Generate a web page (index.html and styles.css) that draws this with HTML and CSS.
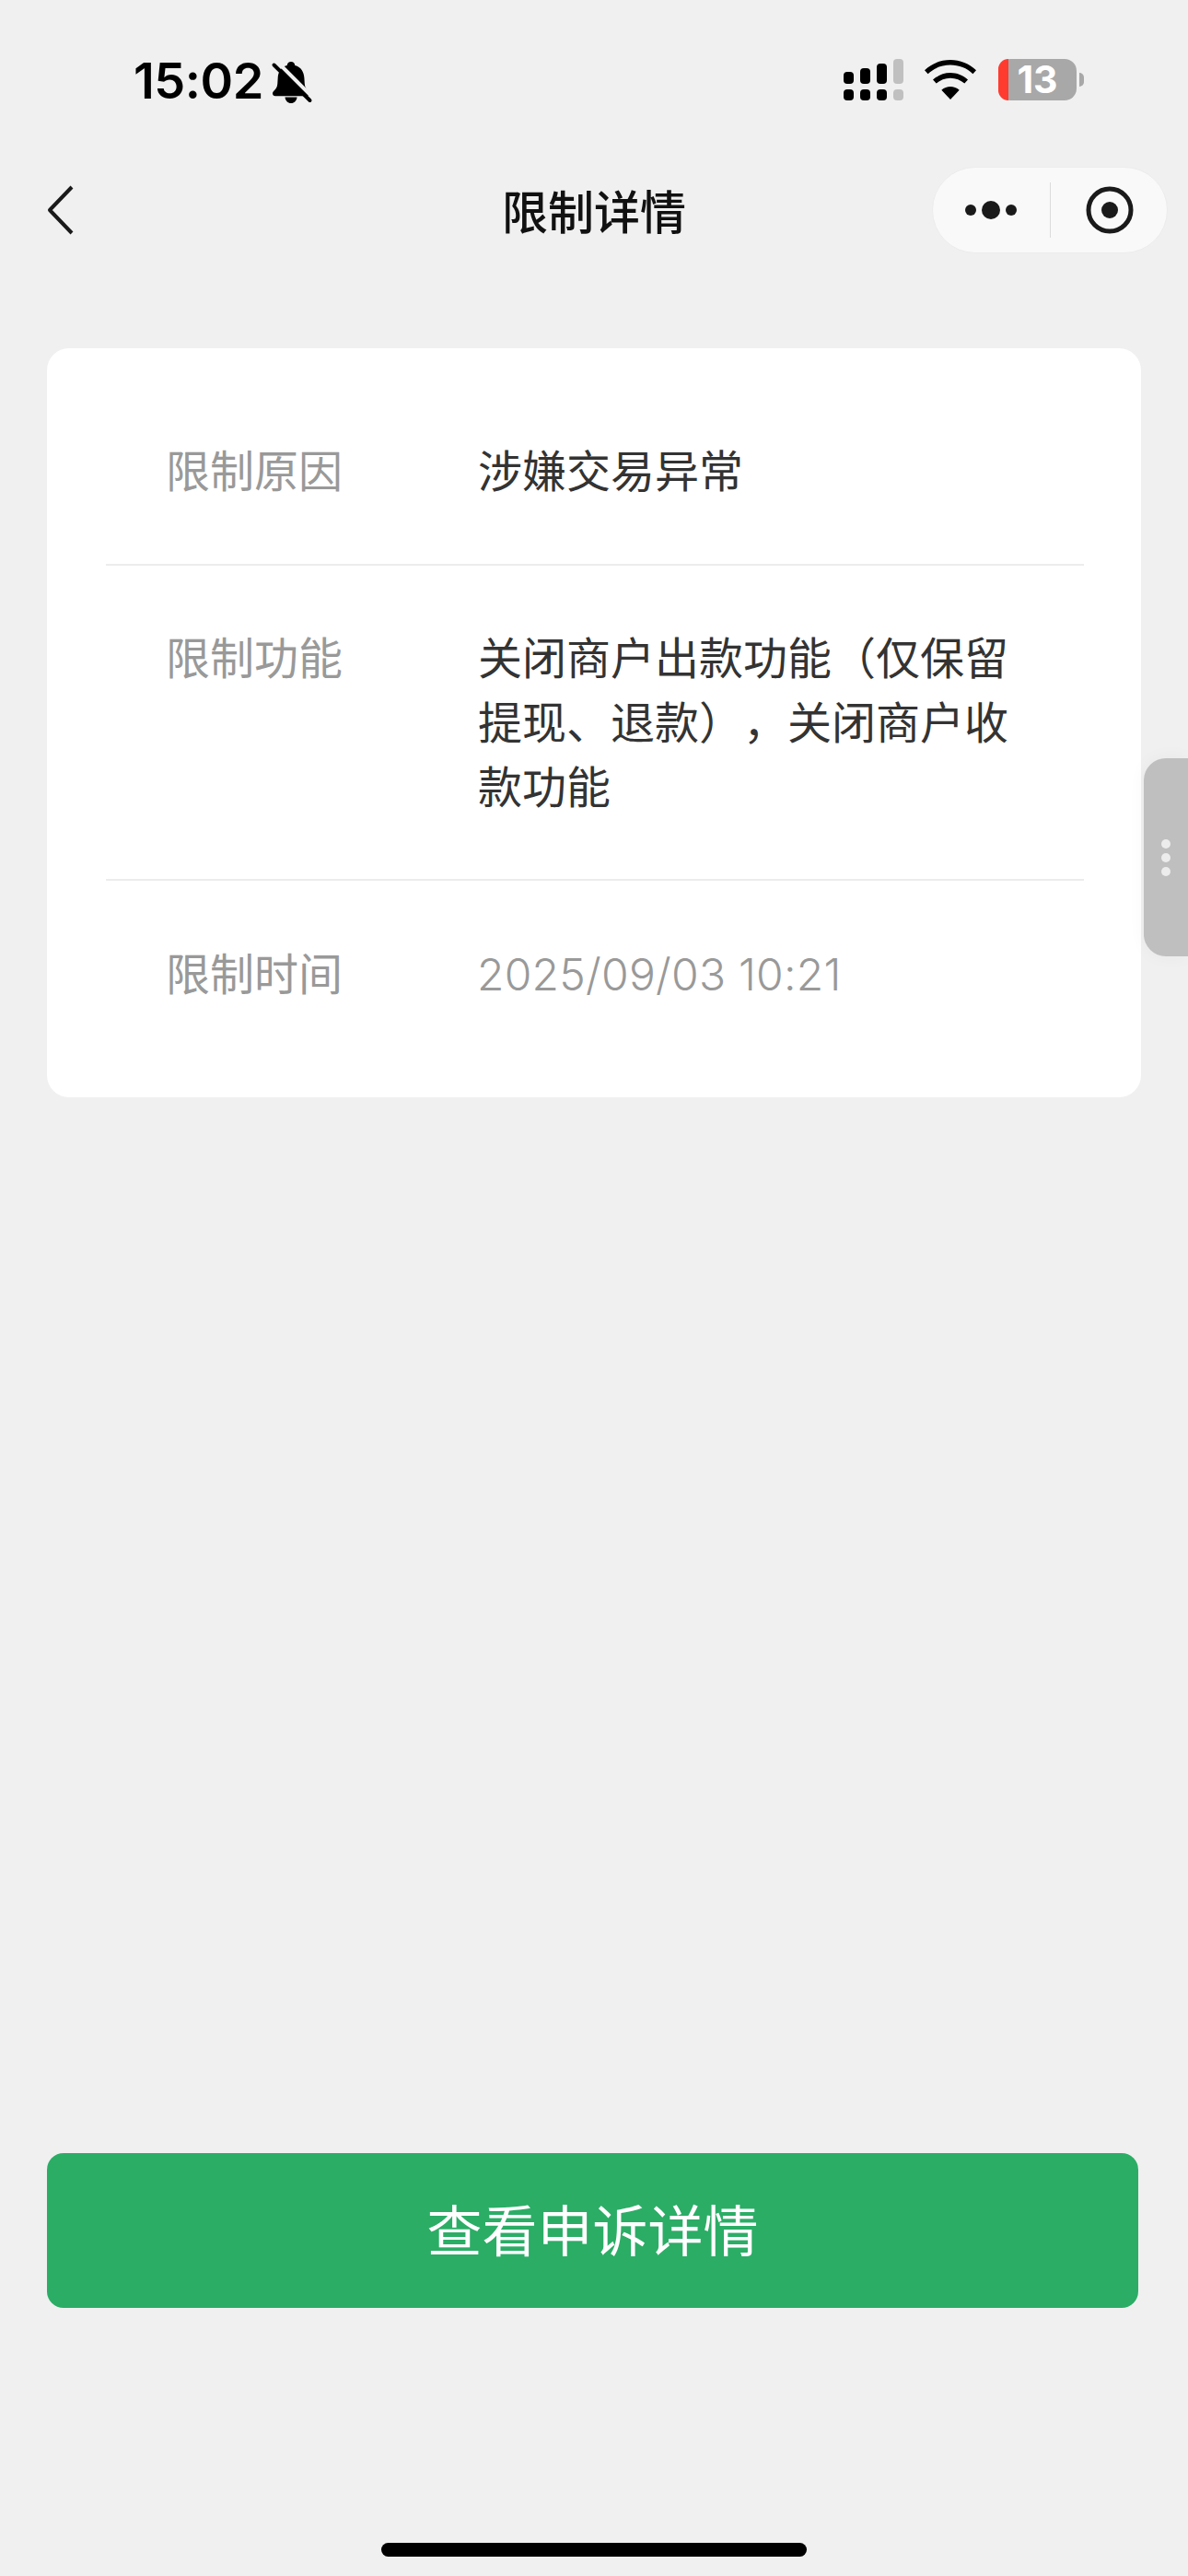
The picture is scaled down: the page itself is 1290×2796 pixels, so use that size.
FILE: index.html
```html
<!DOCTYPE html>
<html lang="zh-CN">
<head>
<meta charset="utf-8">
<title>限制详情</title>
<link rel="stylesheet" href="styles.css">
</head>
<body>
<div class="page">
  <header class="status">
    <div class="status-left">
      <span class="time">15:02</span>
      <svg class="bell" width="46" height="46" viewBox="0 0 46 46">
        <path d="M22 0c2.400 0 4 1.700 4.300 3.900C33 5.600 36 11 36.400 17.500l.4 6.500c.2 3.300 1.500 5.400 4 7.800 1 1 1.300 1.900 1.300 2.800 0 1.600-1.200 2.700-3 2.700H5c-1.800 0-3-1.100-3-2.700 0-.9.300-1.800 1.300-2.800 2.500-2.400 3.800-4.500 4-7.800l.4-6.500C8 11 11 5.600 17.700 3.900 18 1.700 19.600 0 22 0z" fill="#000"/>
        <path d="M15.500 38.500h13C28 42.500 25.500 45 22 45s-6-2.500-6.500-6.500z" fill="#000"/>
        <path d="M7 0l39 39" stroke="#f0f0f0" stroke-width="4"/>
        <path d="M3.500 3.500l39 38.500" stroke="#000" stroke-width="4" stroke-linecap="round"/>
      </svg>
    </div>
    <div class="status-right">
      <svg class="signal" width="66" height="46" viewBox="0 0 66 46">
        <rect x="0" y="14" width="11" height="13" rx="4" fill="#000"/>
        <rect x="18" y="10" width="11" height="17" rx="4" fill="#000"/>
        <rect x="36" y="5" width="11" height="22" rx="4" fill="#000"/>
        <rect x="54" y="0" width="11" height="27" rx="4" fill="#c0c0c0"/>
        <rect x="0" y="33" width="11" height="12" rx="4" fill="#000"/>
        <rect x="18" y="33" width="11" height="12" rx="4" fill="#000"/>
        <rect x="36" y="33" width="11" height="12" rx="4" fill="#000"/>
        <rect x="54" y="33" width="11" height="12" rx="4" fill="#c0c0c0"/>
      </svg>
      <svg class="wifi" width="58" height="44" viewBox="0 0 58 44">
        <path d="M29 0c10.500 0 20.500 4 28 11.300l-3.600 4C47 9 38.300 5.600 29 5.600S11 9 4.600 15.300L1 11.300C8.500 4 18.500 0 29 0z" fill="#000"/>
        <path d="M29 14c7 0 13.700 2.700 19 7.600l-3.700 4C40.200 22 34.800 19.800 29 19.800S17.800 22 13.700 25.600l-3.700-4C15.300 16.700 22 14 29 14z" fill="#000"/>
        <path d="M29 29c3.500 0 6.800 1.300 9.700 3.700L29 43 19.300 32.700C22.200 30.300 25.500 29 29 29z" fill="#000"/>
      </svg>
      <div class="battery">
        <div class="battery-body">
          <span class="battery-low"></span>
          <span class="battery-num">13</span>
        </div>
        <span class="battery-cap"></span>
      </div>
    </div>
  </header>

  <nav class="nav">
    <svg class="back" width="30" height="54" viewBox="0 0 30 54">
      <path d="M27 2 L3 27 L27 52" fill="none" stroke="#1a1a1a" stroke-width="4" stroke-linejoin="round"/>
    </svg>
    <h1 class="title">限制详情</h1>
    <div class="capsule">
      <svg class="capsule-more" width="58" height="22" viewBox="0 0 58 22">
        <circle cx="6" cy="11" r="6" fill="#1a1a1a"/>
        <circle cx="28" cy="11" r="10" fill="#1a1a1a"/>
        <circle cx="50" cy="11" r="6" fill="#1a1a1a"/>
      </svg>
      <span class="capsule-sep"></span>
      <svg class="capsule-record" width="52" height="52" viewBox="0 0 52 52">
        <circle cx="26" cy="26" r="23" fill="none" stroke="#1a1a1a" stroke-width="5"/>
        <circle cx="26" cy="26" r="9" fill="#1a1a1a"/>
      </svg>
    </div>
  </nav>

  <main class="card">
    <div class="row">
      <div class="label">限制原因</div>
      <div class="value">涉嫌交易异常</div>
    </div>
    <div class="row">
      <div class="label">限制功能</div>
      <div class="value">关闭商户出款功能（仅保留提现、退款），关闭商户收款功能</div>
    </div>
    <div class="row">
      <div class="label">限制时间</div>
      <div class="value value-muted">2025/09/03 10:21</div>
    </div>
  </main>

  <div class="spacer"></div>
  <button class="action">查看申诉详情</button>
</div>

<aside class="handle">
  <span></span><span></span><span></span>
</aside>
<div class="home-bar"></div>
</body>
</html>
```
FILE: styles.css
```css
* { box-sizing: border-box; }
html, body { margin: 0; padding: 0; }
body {
  width: 1290px;
  height: 2796px;
  background: #f0f0f0;
  position: relative;
  overflow: hidden;
  font-family: "Inter", "Noto Sans CJK SC", sans-serif;
  text-spacing-trim: space-all;
}
.page {
  height: 2796px;
  display: flex;
  flex-direction: column;
}
.status {
  height: 158px;
  padding: 62px 113px 0 145px;
  display: flex;
  justify-content: space-between;
  align-items: flex-start;
  flex: none;
}
.status-left { display: flex; align-items: center; gap: 8px; }
.time {
  font-size: 54px;
  font-weight: 600;
  line-height: 52px;
  color: #000;
  letter-spacing: -0.5px;
}
.bell { margin-top: 3px; }
.status-right { display: flex; align-items: flex-start; gap: 23px; margin-top: 2px; }
.signal { margin-right: -2px; }
.wifi { margin-top: 1px; }
.battery { display: flex; align-items: center; gap: 3px; }
.battery-body {
  width: 85px;
  height: 45px;
  border-radius: 13px;
  background: #a8a8a8;
  position: relative;
  display: flex;
  align-items: center;
  justify-content: center;
}
.battery-low {
  position: absolute;
  left: 0;
  top: 0;
  bottom: 0;
  width: 11px;
  background: #ff3b30;
  border-radius: 13px 0 0 13px;
}
.battery-num {
  position: relative;
  color: #fff;
  font-size: 41px;
  font-weight: 700;
  line-height: 45px;
}
.battery-cap {
  width: 5px;
  height: 15px;
  background: #a8a8a8;
  border-radius: 0 8px 8px 0;
}
.nav {
  height: 220px;
  flex: none;
  padding: 23px 22px 0;
  display: grid;
  grid-template-columns: 1fr auto 1fr;
  align-items: start;
}
.back { margin: 20px 0 0 29px; }
.title {
  margin: 0;
  font-size: 50px;
  font-weight: 500;
  line-height: 92px;
  color: #111;
  font-family: "Noto Sans CJK SC", sans-serif;
}
.capsule {
  justify-self: end;
  width: 256px;
  height: 94px;
  border-radius: 47px;
  background: #f9f9f9;
  border: 1px solid #ececec;
  display: flex;
  align-items: center;
  padding-left: 35px;
}
.capsule-sep { width: 1px; height: 60px; background: #dcdcdc; margin: 0 38px 0 34px; }
.card {
  margin: 0 51px;
  height: 813px;
  flex: none;
  background: #fff;
  border-radius: 24px;
  padding: 0 62px 0 64px;
}
.row {
  display: flex;
  padding: 62px 0 68px 65px;
  border-bottom: 2px solid #ececec;
}
.row:last-child { border-bottom: 0; padding-top: 63px; }
.row:first-child { padding-top: 95px; padding-bottom: 69px; }
.label {
  width: 339px;
  flex: none;
  font-size: 48px;
  line-height: 70px;
  color: #999;
  font-weight: 400;
  font-family: "Noto Sans CJK SC", sans-serif;
}
.value {
  width: 590px;
  font-size: 48px;
  line-height: 70px;
  color: #333;
  font-weight: 400;
  font-family: "Noto Sans CJK SC", sans-serif;
}
.value-muted {
  color: #999;
  font-family: "Inter", "Noto Sans CJK SC", sans-serif;
  font-weight: 300;
  letter-spacing: 0.25px;
  margin-left: -1px;
  padding-top: 4px;
}
.spacer { flex: 1; }
.action {
  flex: none;
  margin: 0 54px 291px 51px;
  height: 168px;
  width: 1185px;
  border: 0;
  border-radius: 18px;
  background: #2bad66;
  color: #fff;
  font-size: 60px;
  font-weight: 400;
  font-family: "Noto Sans CJK SC", sans-serif;
  padding: 0 0 8px;
}
.handle {
  position: absolute;
  left: 1242px;
  top: 823px;
  width: 48px;
  height: 215px;
  background: #bfbfbf;
  border-radius: 24px 0 0 24px;
  box-shadow: 0 0 20px rgba(0, 0, 0, 0.04);
  display: flex;
  flex-direction: column;
  align-items: center;
  justify-content: center;
  gap: 5px;
}
.handle span {
  width: 10px;
  height: 10px;
  border-radius: 50%;
  background: #ececec;
}
.home-bar {
  position: absolute;
  left: 414px;
  top: 2760px;
  width: 462px;
  height: 15px;
  border-radius: 8px;
  background: #000;
}
```
